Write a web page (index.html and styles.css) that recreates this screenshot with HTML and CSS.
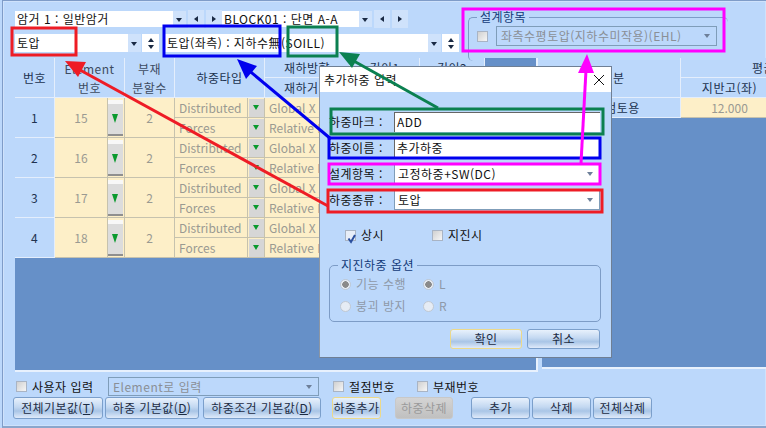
FILE: index.html
```html
<!DOCTYPE html>
<html lang="ko">
<head>
<meta charset="utf-8">
<title>추가하중 입력</title>
<link rel="stylesheet" href="styles.css">
</head>
<body>
<div class="app">
  <div class="top">
    <div class="top-left">
      <div class="row row1">
        <div class="combo c1"><span>암거 1 : 일반암거</span><i class="dd"></i></div>
        <button class="nav"><i class="tl"></i></button>
        <button class="nav"><i class="tr"></i></button>
        <div class="combo c2"><span>BLOCK01 : 단면 A-A</span><i class="dd"></i></div>
        <button class="nav"><i class="tl"></i></button>
        <button class="nav"><i class="tr"></i></button>
      </div>
      <div class="row row2">
        <div class="combo c3"><span>토압</span><i class="dd"></i></div>
        <div class="updown"><i class="tu"></i><i class="td"></i></div>
        <div class="combo c4"><span>토압(좌측) : 지하수無(SOILL)</span><i class="dd"></i></div>
        <div class="updown"><i class="tu"></i><i class="td"></i></div>
      </div>
    </div>
    <div class="group design">
      <span class="legend">설계항목</span>
      <div class="group-row">
        <i class="check"></i>
        <div class="dis-combo wide"><span>좌측수평토압(지하수미작용)(EHL)</span><i class="dd-g"></i></div>
      </div>
    </div>
  </div>

  <div class="main">
    <div class="sheet left">
      <div class="grid">
        <div class="h r2">번호</div>
        <div class="h r2 s2"><span class="tight">Element<br>번호</span></div>
        <div class="h r2"><span class="tight">부재<br>분할수</span></div>
        <div class="h r2 s2">하중타입</div>
        <div class="h">재하방향</div>
        <div class="h">길이1</div>
        <div class="h">길이2</div>
        <div class="h">재하거리</div>
        <div class="h"></div>
        <div class="h"></div>

        <div class="n r2">1</div><div class="c r2">15</div><div class="b r2"><i class="g"></i></div><div class="c r2">2</div>
        <div class="c l">Distributed</div><div class="sb"><i class="gs"></i></div><div class="c l">Global X</div><div class="c"></div><div class="c"></div>
        <div class="c l">Forces</div><div class="sb"><i class="gs"></i></div><div class="c l">Relative D</div><div class="c"></div><div class="c"></div>

        <div class="n r2">2</div><div class="c r2">16</div><div class="b r2"><i class="g"></i></div><div class="c r2">2</div>
        <div class="c l">Distributed</div><div class="sb"><i class="gs"></i></div><div class="c l">Global X</div><div class="c"></div><div class="c"></div>
        <div class="c l">Forces</div><div class="sb"><i class="gs"></i></div><div class="c l">Relative D</div><div class="c"></div><div class="c"></div>

        <div class="n r2">3</div><div class="c r2">17</div><div class="b r2"><i class="g"></i></div><div class="c r2">2</div>
        <div class="c l">Distributed</div><div class="sb"><i class="gs"></i></div><div class="c l">Global X</div><div class="c"></div><div class="c"></div>
        <div class="c l">Forces</div><div class="sb"><i class="gs"></i></div><div class="c l">Relative D</div><div class="c"></div><div class="c"></div>

        <div class="n r2">4</div><div class="c r2">18</div><div class="b r2"><i class="g"></i></div><div class="c r2">2</div>
        <div class="c l">Distributed</div><div class="sb"><i class="gs"></i></div><div class="c l">Global X</div><div class="c"></div><div class="c"></div>
        <div class="c l">Forces</div><div class="sb"><i class="gs"></i></div><div class="c l">Relative D</div><div class="c"></div><div class="c"></div>
      </div>
    </div>
    <div class="sheet right">
      <div class="grid2">
        <div class="h r2">구 분</div>
        <div class="h s2">평균</div>
        <div class="h">지반고(좌)</div>
        <div class="h"></div>
        <div class="n">안정검토용</div>
        <div class="c">12.000</div>
        <div class="c"></div>
      </div>
    </div>
  </div>

  <div class="bottom1">
    <i class="check"></i><span class="lab user">사용자 입력</span>
    <div class="dis-combo elem"><span>Element로 입력</span><i class="dd-g"></i></div>
    <i class="check"></i><span class="lab node">절점번호</span>
    <i class="check"></i><span class="lab">부재번호</span>
  </div>
  <div class="bottom2">
    <button class="btn w90">전체기본값(<u>T</u>)</button>
    <button class="btn w94">하중 기본값(<u>D</u>)</button>
    <button class="btn w118">하중조건 기본값(<u>D</u>)</button>
    <button class="btn w49 sel">하중추가</button>
    <button class="btn w58 off">하중삭제</button>
    <button class="btn w59 a1">추가</button>
    <button class="btn w59">삭제</button>
    <button class="btn w59">전체삭제</button>
  </div>
</div>

<div class="dialog">
  <div class="title"><span>추가하중 입력</span><svg class="close" width="12" height="12" viewBox="0 0 12 12"><path d="M1 1L11 11M11 1L1 11" stroke="#111" stroke-width="1" fill="none"/></svg></div>
  <div class="dbody">
    <div class="frow"><span class="flab">하중마크 :</span><div class="inp">ADD</div></div>
    <div class="frow"><span class="flab">하중이름 :</span><div class="inp">추가하중</div></div>
    <div class="frow"><span class="flab">설계항목 :</span><div class="sel-box"><span>고정하중+SW(DC)</span><i class="dd-g"></i></div></div>
    <div class="frow"><span class="flab">하중종류 :</span><div class="sel-box"><span>토압</span><i class="dd-g"></i></div></div>
    <div class="checks">
      <i class="check on"><svg width="11" height="11" viewBox="0 0 11 11"><path d="M2.5 5.5L5 9L9 2" stroke="#2b4f9e" stroke-width="2" fill="none"/></svg></i><span class="lab w-s">상시</span>
      <i class="check"></i><span class="lab">지진시</span>
    </div>
    <div class="group opts">
      <span class="legend">지진하중 옵션</span>
      <div class="opt-row"><i class="radio dot"></i><span class="gt w-o">기능 수행</span><i class="radio dot"></i><span class="gt">L</span></div>
      <div class="opt-row"><i class="radio"></i><span class="gt w-o">붕괴 방지</span><i class="radio"></i><span class="gt">R</span></div>
    </div>
    <div class="dbtns"><button class="btn w72 sel">확인</button><button class="btn w73">취소</button></div>
  </div>
</div>

<svg class="marks" width="766" height="428" viewBox="0 0 766 428">
  <g fill="none" stroke-width="3">
    <rect x="12" y="28" width="64" height="27" stroke="#ee1c25"/>
    <rect x="164" y="26" width="116" height="30" stroke="#0000ee"/>
    <rect x="288" y="27" width="49" height="29" stroke="#0b8050"/>
    <rect x="463" y="9" width="261" height="42" stroke="#ff00ff"/>
    <rect x="331" y="109" width="272" height="25" stroke="#0b8050"/>
    <rect x="329" y="138" width="271" height="20" stroke="#0000ee"/>
    <rect x="329" y="164" width="271" height="20" stroke="#ff00ff"/>
    <rect x="328" y="190" width="274" height="22" stroke="#ee1c25"/>
  </g>
  <g stroke-width="3">
    <path d="M328 206L80 70" stroke="#ee1c25"/>
    <path d="M65 61L86 62L78 77Z" fill="#ee1c25"/>
    <path d="M331 139L246 68" stroke="#0000ee"/>
    <path d="M237 59L257 66L246 79Z" fill="#0000ee"/>
    <path d="M438 108L352 60" stroke="#0b8050"/>
    <path d="M339 52L360 54L352 68Z" fill="#0b8050"/>
    <path d="M581 163L586 70" stroke="#ff00ff"/>
    <path d="M587 54L594 73L578 73Z" fill="#ff00ff"/>
  </g>
</svg>
</body>
</html>
```
FILE: styles.css
```css
* { box-sizing: border-box; }
html, body { margin: 0; padding: 0; }
body {
  width: 766px; height: 428px; overflow: hidden; position: relative;
  background: #bcd8fb; color: #111;
  font: 12px/16px "Noto Sans CJK KR", "Noto Sans", sans-serif;
  letter-spacing: .5px;
}
i { display: block; font-style: normal; flex: none; }
button { font: inherit; padding: 0; margin: 0; color: inherit; letter-spacing: .4px; }

.app {
  height: 428px; padding: 10px 0 0 12px;
  border-left: 1px solid #7f9cc8; margin-left: 2px;
  border-top: 1px solid #7f9cc8; border-bottom: 2px solid #8aa6cc;
  box-shadow: inset 0 0 0 1px #cfe2fb;
}

/* top bars */
.top { display: flex; height: 40px; position: relative; }
.top-left { width: 453px; flex: none; }
.row { display: flex; align-items: center; }
.row1 { height: 16px; gap: 2px; }
.row2 { height: 18px; margin-top: 7px; gap: 1px; }
.combo { display: flex; align-items: center; background: #fff; height: 100%; }
.combo span { flex: 1; padding-left: 2px; white-space: nowrap; }
.dd { width: 13px; height: 100%; background: #cfe2fb; position: relative; }
.dd::after { content: ""; position: absolute; left: 3px; top: 50%; margin-top: -1px; border: 3.5px solid transparent; border-top: 4px solid #1a2a44; border-bottom: 0; }
.c1 { width: 171px; }
.c2 { width: 150px; margin-left: -2px; }
.c3 { width: 126px; }
.c4 { width: 278px; margin-left: 3px; }
.c4 span { padding-left: 4px; }
.nav { width: 16px; height: 18px; border: 0; background: #cfe2fb; display: flex; align-items: center; justify-content: center; }
.tl { border: 3.5px solid transparent; border-right: 4px solid #1a2a44; border-left: 0; }
.tr { border: 3.5px solid transparent; border-left: 4px solid #1a2a44; border-right: 0; }
.updown { width: 17px; height: 18px; background: #fff; display: flex; flex-direction: column; align-items: center; justify-content: center; gap: 3px; }
.tu { border: 3.5px solid transparent; border-bottom: 4px solid #1a2a44; border-top: 0; }
.td { border: 3.5px solid transparent; border-top: 4px solid #1a2a44; border-bottom: 0; }

.group { border: 1px solid #7d9cc6; border-radius: 5px; position: relative; }
.legend { position: absolute; left: 8px; top: -9px; background: #bcd8fb; padding: 0 3px; color: #123a78; white-space: nowrap; line-height: 16px; }
.design { width: 260px; height: 44px; margin-top: 6px; border-bottom: 0; border-right: 0; }
.group-row { display: flex; align-items: center; gap: 8px; padding: 8px 0 0 8px; }
.check { width: 11px; height: 11px; background: linear-gradient(135deg, #d0d0d0, #f6f6f6); border: 1px solid #a9b4c4; }
.dis-combo { display: flex; align-items: center; justify-content: space-between; border: 1px solid #7f9db9; height: 20px; color: #8a8f96; padding: 0 6px 0 4px; white-space: nowrap; }
.dd-g { width: 0; border: 3.5px solid transparent; border-top: 4px solid #6d7f99; border-bottom: 0; }
.wide { width: 221px; }

/* sheets */
.main { display: flex; height: 314px; margin-top: 7px; gap: 4px; }
.sheet { background: #6690c8; border-bottom: 2px solid #e8f1fd; border-right: 2px solid #e8f1fd; overflow: hidden; }
.left { width: 523px; flex: none; }
.right { flex: 1; height: 311px; border-right: 0; }
.grid { display: grid; grid-template-columns: 40px 53px 17px 50px 73px 17px 85px 70px 65px; grid-auto-rows: 20px; width: 470px; }
.grid2 { display: grid; grid-template-columns: 139px 98px 68px; grid-auto-rows: 20px; width: 305px; }
.grid > div, .grid2 > div { display: flex; align-items: center; justify-content: center; min-width: 0; overflow: hidden; white-space: nowrap; }
.r2 { grid-row: span 2; }
.s2 { grid-column: span 2; }
.h { background: #bcd8fb; border-right: 1px solid #e4eefc; border-bottom: 1px solid #e4eefc; color: #20324f; }
.tight { line-height: 19px; display: block; color: #3d4b60; text-align: center; }
.n { background: #bcd8fb; border-right: 1px solid #e4eefc; border-bottom: 1px solid #e4eefc; color: #20324f; }
.c { background: #fdefc8; border-right: 1px solid #c6c2ae; border-bottom: 1px solid #c6c2ae; color: #9a9a92; letter-spacing: 0; }
.grid > .l { justify-content: flex-start; padding-left: 4px; }
.b { background: #fdefc8; border-right: 1px solid #c6c2ae; border-bottom: 1px solid #c6c2ae; padding: 2px 1px 2px 0; }
.grid > .b { align-items: stretch; }
.g { width: 15px; height: 36px; background: linear-gradient(#f8f8f8 0 4px, #dcdcdc 4px 34px, #8f8f8f 34px); position: relative; }
.g::after { content: ""; position: absolute; left: 4px; top: 14px; border: 3.5px solid transparent; border-top: 9px solid #0a9a2e; border-bottom: 0; }
.sb { background: #fdefc8; border-right: 1px solid #c6c2ae; border-bottom: 1px solid #c6c2ae; padding: 1px; }
.gs { width: 15px; height: 18px; background: #d6d6d6; position: relative; }
.gs::after { content: ""; position: absolute; left: 4px; top: 6px; border: 3.5px solid transparent; border-top: 5px solid #0a9a2e; border-bottom: 0; }

/* bottom */
.bottom1 { display: flex; align-items: center; height: 19px; margin-top: 5px; padding-left: 1px; }
.lab { padding-left: 5px; white-space: nowrap; }
.user { width: 81px; }
.elem { width: 211px; height: 19px; margin-right: 14px; }
.node { width: 73px; }
.bottom2 { display: flex; height: 22px; margin-top: 1px; margin-left: -2px; gap: 2px; }
.btn {
  height: 22px; border: 1px solid #7b9fcb; border-radius: 3px; color: #1d2c44; white-space: nowrap;
  background: linear-gradient(#e8f1fc, #c3d8f1 45%, #a9c5e6 65%, #dfeafa);
}
.w90 { width: 90px; } .w94 { width: 94px; margin-right: 2px; } .w118 { width: 118px; margin-right: 9px; }
.w49 { width: 49px; margin-right: 12px; } .w58 { width: 58px; margin-right: 16px; } .w59 { width: 59px; }
.w72 { width: 72px; } .w73 { width: 73px; }
.sel { border-color: #ecd98a; }
.off { background: linear-gradient(#d4d4d4, #c0c0c0); color: #9a9a9a; border-color: #c8c8c8; }

/* dialog */
.dialog { position: absolute; left: 319px; top: 66px; width: 293px; height: 292px; background: #bcd8fb; border: 1px solid #6f7f94; border-left-color: #8b96a5; }
.title { height: 25px; background: #fff; display: flex; align-items: center; justify-content: space-between; padding: 0 6px 0 4px; }
.dbody { padding: 20px 11px 0 9px; }
.frow { display: flex; align-items: center; height: 20px; margin-bottom: 6px; }
.flab { width: 65px; flex: none; white-space: nowrap; }
.inp { flex: 1; height: 20px; background: #fff; border-top: 1px solid #666; border-left: 1px solid #666; padding-left: 2px; line-height: 18px; }
.sel-box { flex: 1; height: 20px; background: #fff; border: 1px solid #7f9db9; display: flex; align-items: center; justify-content: space-between; padding: 0 6px 0 3px; }
.checks { display: flex; align-items: center; margin: 17px 0 0 16px; height: 16px; }
.check.on { background: #e8eef8; }
.w-s { width: 76px; }
.opts { margin-top: 22px; width: 272px; height: 57px; padding: 7px 0 0 10px; }
.opt-row { display: flex; align-items: center; height: 22px; }
.radio { width: 11px; height: 11px; border-radius: 50%; background: #e6ecf4; border: 1px solid #c0c8d2; margin-right: 5px; }
.radio.dot { background: radial-gradient(circle, #8a8a8a 0 3px, #e6ecf4 3.5px); }
.gt { color: #8e99a8; }
.w-o { width: 67px; }
.dbtns { display: flex; justify-content: flex-end; gap: 5px; margin-top: 7px; }
.dbtns .btn { height: 20px; line-height: 16px; }

.marks { position: absolute; left: 0; top: 0; pointer-events: none; }
```
